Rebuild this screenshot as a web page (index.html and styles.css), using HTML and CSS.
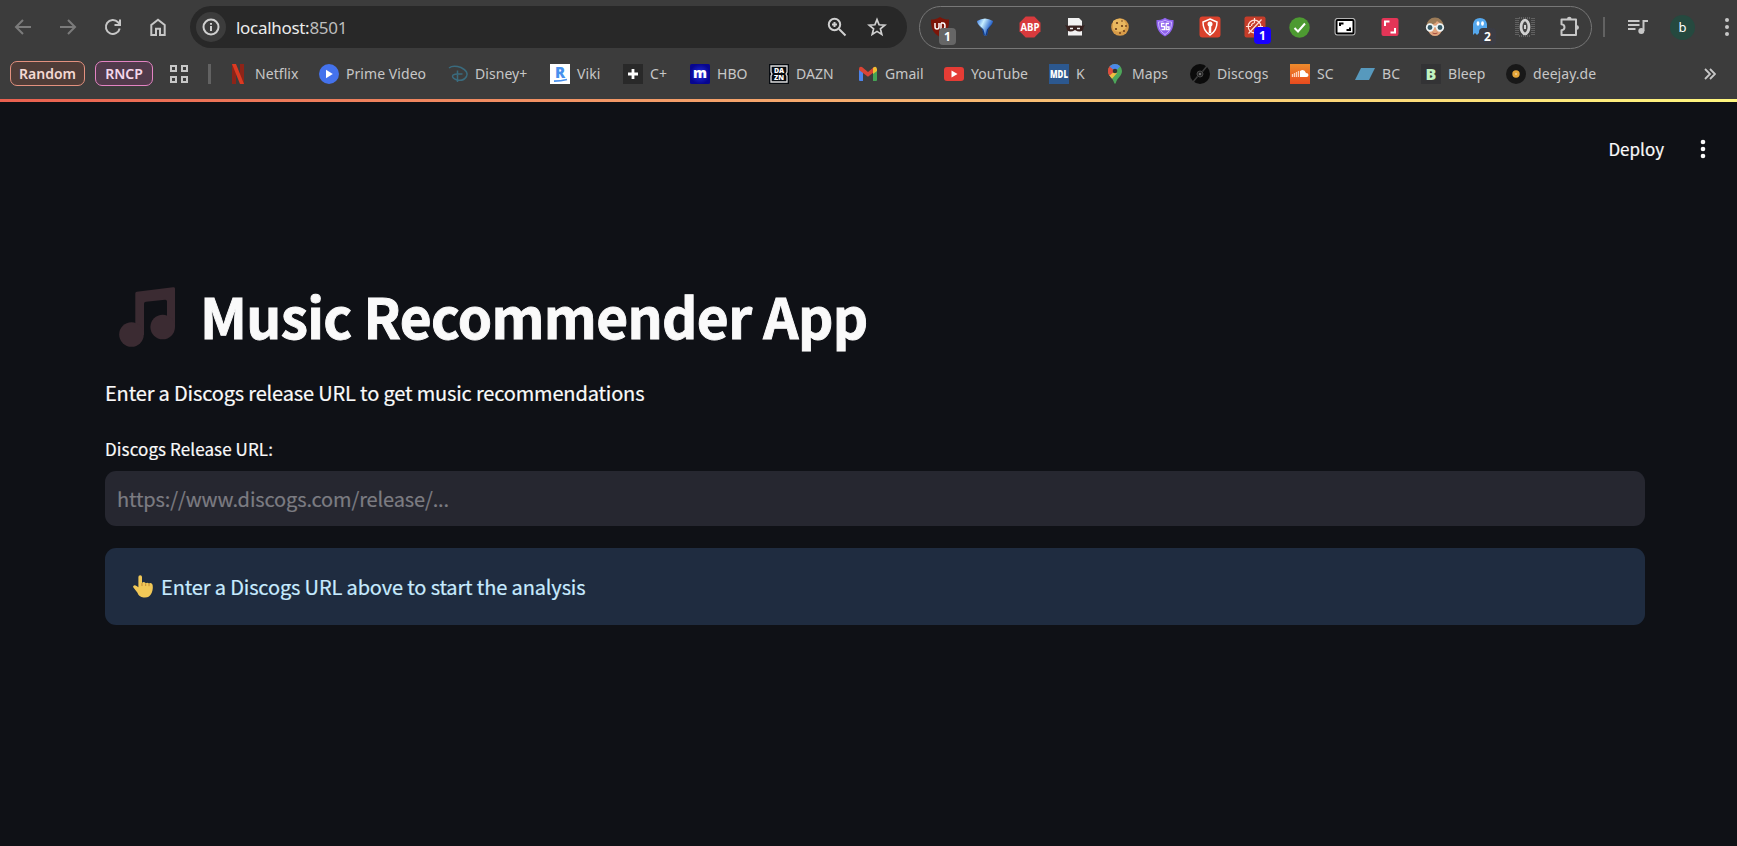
FILE: index.html
```html
<!DOCTYPE html>
<html lang="en">
<head>
<meta charset="utf-8">
<title>Music Recommender App</title>
<link rel="stylesheet" href="styles.css">
</head>
<body>
<header class="browser">
  <div class="toolbar">
    <div class="nav">
      <span class="nav-btn dim"><svg width="18" height="18" viewBox="0 0 18 18"><path d="M17 9H2.5M9 2L2 9l7 7"/></svg></span>
      <span class="nav-btn dim"><svg width="18" height="18" viewBox="0 0 18 18"><path d="M1 9h14.500M9 2l7 7-7 7"/></svg></span>
      <span class="nav-btn"><svg width="18" height="18" viewBox="0 0 18 18"><path d="M15.700 10.500A7 7 0 1 1 14 4.200L15.700 6M16 1.500V7h-5.500"/></svg></span>
      <span class="nav-btn"><svg width="18" height="18" viewBox="0 0 18 18"><path d="M2.300 17V7L9 1.800 15.700 7v10H11v-6.300H7V17z"/></svg></span>
    </div>
    <div class="omnibox">
      <span class="info"><svg width="18" height="18" viewBox="0 0 18 18"><circle cx="9" cy="9" r="7.500"/><path d="M9 8v5M9 5v1.800"/></svg></span>
      <span class="url">localhost:<span class="port">8501</span></span>
      <svg class="line-icon" width="20" height="20" viewBox="0 0 20 20"><circle cx="7.500" cy="7.500" r="5.700"/><path d="M12 12l6.500 6.500M7.500 5v5M5 7.500h5"/></svg>
      <svg class="line-icon star" width="20" height="20" viewBox="0 0 20 20"><path d="M10 2.600l2.100 5.200 5.700.4-4.400 3.600 1.400 5.600-4.800-3-4.800 3 1.400-5.600-4.400-3.600 5.700-.4z"/></svg>
    </div>
    <div class="extensions">
      <span class="ext"><svg width="20" height="20" viewBox="0 0 20 20"><path fill="#7c1508" d="M10 0c3 2 6 2.500 9 2.500 0 8-1 13-9 17.500C2 15.500 1 10.500 1 2.500 4 2.500 7 2 10 0z"/><path d="M5 6v4q0 2 2 2t2-2V6m2 0v6m0-6h2q2 0 2 3t-2 3" fill="none" stroke="#fff" stroke-width="1.500"/></svg><b class="badge grey">1</b></span>
      <span class="ext"><svg width="20" height="20" viewBox="0 0 20 20"><defs><linearGradient id="gem" x2="1" y2=".5"><stop stop-color="#3273df"/><stop offset=".4" stop-color="#c8efff"/><stop offset=".9" stop-color="#1b58c5"/></linearGradient></defs><path d="M2 4Q10-1 18 4q0 3-4.500 7L12 18.500h-3L7.500 12Q2 7 2 4z" fill="url(#gem)"/><path d="M3 7l5.500 5.500 1.500 6-1.500-.5-1.500-6zM17 7l-5 5.500-1.500 6 1.500-.5 1.500-6z" fill="#103a86"/></svg></span>
      <span class="ext"><svg width="22" height="22" viewBox="0 0 22 22"><path fill="#d83a3d" d="M6.700.500h8.600l6.200 6.200v8.600l-6.200 6.200H6.700L.500 15.300V6.700z"/><text x="11" y="14.800" textLength="19" lengthAdjust="spacingAndGlyphs" class="abp">ABP</text></svg></span>
      <span class="ext"><svg width="20" height="20" viewBox="0 0 20 20"><path d="M3 1h11l3 3v14.500H3z" fill="#f1f1f1"/><path d="M0 8q2 1 5 .5h10q3 .5 5-.5l-1.500 2.500q0 4-4 4-2 0-4.500-1.500-2.500 1.500-4.500 1.500-4 0-4-4z" fill="#38211f"/><path d="M5 11.500h3M12 11.500h3" stroke="#eee" stroke-width="1.500"/></svg></span>
      <span class="ext"><svg width="20" height="20" viewBox="0 0 20 20"><circle cx="10" cy="10" r="8.800" fill="#d79b48"/><path d="M3 4q8-5 12 1 3 5-1 8-7 4-11-1z" fill="#e9b75f"/><g fill="#6a3b18"><circle cx="7" cy="6" r="1.100"/><circle cx="12" cy="4" r=".8"/><circle cx="12" cy="9" r="1.100"/><circle cx="6" cy="12" r="1.100"/><circle cx="14" cy="14" r="1"/><circle cx="10" cy="16" r=".9"/><circle cx="16" cy="9" r=".9"/></g></svg></span>
      <span class="ext"><svg width="20" height="20" viewBox="0 0 20 20"><path d="M10 .8C13 3 16 3 18.500 3c.5 7-1.500 13-8.500 16.500C3 16 1 10 1.500 3 4 3 7 3 10 .8z" fill="#8e61ed"/><path d="M10 3c2 1.500 4 2 6.500 2 0 6-2 9.500-6.500 12.500C5.500 14.500 3.500 11 3.500 5 6 5 8 4.500 10 3z" fill="none" stroke="#cbb6ff"/><path d="M9.500 6.500H6.500v3h3v3H6.500M14 6.500h-2.800v6H14V10h-2" fill="none" stroke="#fff" stroke-width="1.300"/></svg></span>
      <span class="ext"><svg width="22" height="22" viewBox="0 0 22 22"><rect x=".5" y=".5" width="21" height="21" rx="3" fill="#da412c"/><path d="M11 3l7 3q0 9-7 13Q4 15 4 6z" fill="none" stroke="#fff" stroke-width="1.500"/><circle cx="11" cy="8" r="2.500" fill="#fff"/><path d="M11 9v8" stroke="#fff" stroke-width="2.500"/></svg></span>
      <span class="ext"><svg width="22" height="22" viewBox="0 0 22 22"><rect x=".5" y=".5" width="21" height="21" rx="2" fill="#c53c29"/><g fill="none" stroke="#ffe1d8" stroke-width="1.200"><circle cx="10.500" cy="10.500" r="6.300"/><path d="M10.500 2v5M10.500 14v5M2 10.500h5M14 10.500h5M4.500 17.500L17.500 3.500M7.500 10a3 3 0 0 1 3-3M13.500 11a3 3 0 0 1-3 3"/></g></svg><b class="badge blue">1</b></span>
      <span class="ext"><svg width="21" height="21" viewBox="0 0 21 21"><circle cx="10.500" cy="10.500" r="10.200" fill="#4d9a31"/><path d="M5.500 11l3.500 3.500 7-8" fill="none" stroke="#fff" stroke-width="2"/></svg></span>
      <span class="ext"><svg width="22" height="20" viewBox="0 0 22 20"><rect x="1" y="1.500" width="20" height="16.500" rx="2" fill="#fff" stroke="#b3b3b3"/><rect x="2.500" y="3" width="17" height="13.500" rx="1" fill="#fff" stroke="#000" stroke-width="2"/><path d="M6 9V6.500h3.500M16 10.500V13h-3.500" fill="none" stroke="#000" stroke-width="2"/></svg></span>
      <span class="ext"><svg width="20" height="20" viewBox="0 0 20 20"><rect x="1.500" y="1" width="17" height="18" rx="2" fill="#e33557"/><path d="M5 9V4.500h4.500M15 11v4.500h-4.500" fill="none" stroke="#fff" stroke-width="2"/></svg></span>
      <span class="ext"><svg width="20" height="20" viewBox="0 0 20 20"><circle cx="10" cy="9" r="8.500" fill="#9b7b58"/><path d="M3 8q7 0 9-4 4 2 5 5v4q-2 6-7 6t-7-6z" fill="#e0a47d"/><g fill="#385b68" stroke="#edf4f5" stroke-width="1.700"><circle cx="5" cy="10.500" r="3.300"/><circle cx="15" cy="10.500" r="3.300"/><path d="M8.500 9.500h3"/></g><path d="M7.500 16q2.500 1.500 5 0" stroke="#a64c3f" fill="none"/></svg></span>
      <span class="ext"><svg width="20" height="20" viewBox="0 0 20 20"><path d="M3 17V7q1-6 7-6t7 6v11l-3-2-2 2-3-2-2 2-2-2-2 2z" fill="#55a8ed"/><ellipse cx="8" cy="6.500" rx="1.400" ry="2.200" fill="#fff"/><ellipse cx="12.500" cy="6.500" rx="1.400" ry="2.200" fill="#fff"/></svg><b class="badge dark">2</b></span>
      <span class="ext"><svg width="20" height="20" viewBox="0 0 20 20"><path d="M1 1v18M3 1v18M17 1v18M19 1v18M4 1h12M4 19h12" stroke="#858585" stroke-dasharray="1 1"/><ellipse cx="10" cy="10" rx="4" ry="6.800" fill="#444" stroke="#d0d0d0" stroke-width="2.800"/><path d="M10 8v4" stroke="#d0d0d0" stroke-width="2"/></svg></span>
      <span class="ext"><svg width="22" height="22" viewBox="0 0 22 22"><path d="M2.500 3.500h14.500v15.500H2.500v-4.700q3-.3 3-3t-3-3z" fill="none" stroke="#c7c7c7" stroke-width="2" stroke-linejoin="round"/><path d="M8 3a2.300 2.300 0 0 1 4.600 0zM17.500 9a2.500 2.500 0 0 1 0 5z" fill="#c7c7c7"/></svg></span>
    </div>
    <span class="divider"></span>
    <svg class="queue" width="20" height="16" viewBox="0 0 20 16"><path d="M0 2h11.500M0 6h11.500M0 10h7.500M15.500 12V2H20" fill="none" stroke="#c7c7c7" stroke-width="2"/><circle cx="13.300" cy="12" r="3" fill="#c7c7c7"/></svg>
    <span class="avatar">b</span>
    <svg class="kebab" width="6" height="20" viewBox="0 0 6 20"><circle cx="3" cy="3" r="2"/><circle cx="3" cy="10" r="2"/><circle cx="3" cy="17" r="2"/></svg>
  </div>
  <nav class="bookmarks">
    <span class="group random">Random</span>
    <span class="group rncp">RNCP</span>
    <svg class="apps" width="18" height="18" viewBox="0 0 18 18"><path d="M1 1h5v5H1zM12 1h5v5h-5zM1 12h5v5H1zM12 12h5v5h-5z" fill="none" stroke="#c7c7c7" stroke-width="2"/></svg>
    <span class="divider short"></span>
    <div class="links">
      <span class="link"><svg viewBox="0 0 20 20"><path d="M4 0h4v20H4zM12 0h4v20h-4z" fill="#8e2418"/><path d="M4 0h4l8 20h-4z" fill="#dc3a22"/></svg>Netflix</span>
      <span class="link"><svg viewBox="0 0 20 20"><circle cx="10" cy="10" r="10" fill="#4472ec"/><path d="M7 5.700l6.800 4.300L7 14.300z" fill="#fff"/></svg>Prime Video</span>
      <span class="link"><svg viewBox="0 0 20 20"><path d="M1 4q4-3 12-.5 8 4 5.500 9-3 5-9.500 3.500-4.500-1.500-4.500-4 0-2.500 10-2M9.500 6.500V18" fill="none" stroke="#3a6b7e" stroke-width="1.500"/></svg>Disney+</span>
      <span class="link"><svg viewBox="0 0 20 20"><path fill="#fff" d="M0 0h20v20H0z"/><text x="10" y="14" class="viki">R</text><path d="M4 17.200q7-.2 13-1.700" stroke="#4790ed" stroke-width="1.800" fill="none"/></svg>Viki</span>
      <span class="link"><svg viewBox="0 0 20 20"><path fill="#292929" d="M0 0h20v20H0z"/><path d="M10 5v10M5 10h10" stroke="#fff" stroke-width="2.800"/></svg>C+</span>
      <span class="link"><svg viewBox="0 0 20 20"><defs><radialGradient id="hbo"><stop stop-color="#2530e0"/><stop offset="1" stop-color="#070690"/></radialGradient></defs><rect width="20" height="20" rx="1.500" fill="url(#hbo)"/><text x="10" y="14.300" class="hbo">m</text></svg>HBO</span>
      <span class="link"><svg viewBox="0 0 20 20"><path fill="#070b10" d="M0 0h20v20H0z"/><path d="M2 8V2h16v6l-1 2 1 2v6H2v-6l1-2z" fill="none" stroke="#ddd" stroke-width="1.300"/><text x="10" y="9.300" class="dazn">DA</text><text x="10" y="16.200" class="dazn">ZN</text></svg>DAZN</span>
      <span class="link"><svg viewBox="0 0 20 20"><path fill="#4c83ea" d="M1 5l4 3v9H2q-1 0-1-1z"/><path fill="#45a455" d="M19 5l-4 3v9h3q1 0 1-1z"/><path fill="#d94435" d="M1 5q0-3 3-2l6 5 6-5v5l-6 4.700L1 6z"/><path fill="#f2bd32" d="M15 4q3-3 4 1v2l-4 3z"/></svg>Gmail</span>
      <span class="link"><svg viewBox="0 0 20 20"><rect y="3" width="20" height="14" rx="3" fill="#e53c35"/><path d="M7.500 6.500L13.500 10l-6 3.500z" fill="#fff"/></svg>YouTube</span>
      <span class="link"><svg viewBox="0 0 20 20"><path fill="#2c588f" d="M0 0h20v20H0z"/><text x="10" y="13.600" textLength="18" lengthAdjust="spacingAndGlyphs" class="mdl">MDL</text></svg>K</span>
      <span class="link"><svg viewBox="0 0 20 20"><defs><clipPath id="pin"><path d="M10 0a7 7 0 0 1 7 7c0 5-5 7-6 11.500q-1 2.500-2 0C8 14 3 12 3 7a7 7 0 0 1 7-7z"/></clipPath></defs><g clip-path="url(#pin)"><path fill="#4da75a" d="M0 0h20v20H0z"/><path d="M0 0h5.500L10 7l-6 6H0z" fill="#dd4c3e"/><path d="M4 2L6 0h9l.5 2L9 9z" fill="#4b88e8"/><path d="M2 12l6-7 4 4-6 7z" fill="#f0bd41"/><path d="M2 4l2-2 6 5-6 5H2z" fill="#dd4c3e"/></g><circle cx="10" cy="7" r="2.300" fill="#343434"/></svg>Maps</span>
      <span class="link"><svg viewBox="0 0 20 20"><circle cx="10" cy="10" r="10" fill="#0b0b0b"/><circle cx="10" cy="10" r="3" fill="#292929" stroke="#484848"/><path d="M12.500 7.500L17 2M7.500 12.500L3 18" stroke="#3c3c3c" stroke-width="1.500"/><circle cx="10" cy="10" r="1" fill="#888"/></svg>Discogs</span>
      <span class="link"><svg viewBox="0 0 20 20"><defs><linearGradient id="sc" y2="1" x2="0"><stop stop-color="#ed8b2c"/><stop offset="1" stop-color="#e84a1e"/></linearGradient></defs><path fill="url(#sc)" d="M0 0h20v20H0z"/><path d="M10 13V7q4-3 6 2 2.500 0 2.500 2t-2 2z" fill="#fff"/><path d="M2.500 10v3M4.500 9v4M6.500 8v5M8.500 7v6" stroke="#ffd4ba" stroke-width="1.300"/></svg>SC</span>
      <span class="link"><svg viewBox="0 0 20 20"><path fill="#5799bd" d="M6 4h14l-6 12H0z"/></svg>BC</span>
      <span class="link"><svg viewBox="0 0 20 20"><path fill="#333335" d="M0 0h20v20H0z"/><text x="10" y="16" class="bleep">B</text></svg>Bleep</span>
      <span class="link"><svg viewBox="0 0 20 20"><circle cx="10" cy="10" r="10" fill="#181818"/><circle cx="10" cy="10" r="3.700" fill="#e4a538"/><circle cx="10" cy="10" r=".7" fill="#fff"/></svg>deejay.de</span>
    </div>
    <svg class="more" width="12" height="12" viewBox="0 0 12 12"><path d="M1 1l5 5-5 5M6 1l5 5-5 5" fill="none" stroke="#c7c7c7" stroke-width="1.800"/></svg>
  </nav>
</header>
<div class="stripe"></div>
<div class="app-bar">
  <span class="deploy">Deploy</span>
  <svg width="6" height="20" viewBox="0 0 6 20"><circle cx="3" cy="3" r="2.300"/><circle cx="3" cy="10" r="2.300"/><circle cx="3" cy="17" r="2.300"/></svg>
</div>
<main class="content">
  <h1 class="title">
    <svg class="note" width="58" height="60" viewBox="0 0 58 60"><path d="M17.300 6.500q0-1.500 1.500-1.700L55 .2q2-.2 2 1.300V40H49V14.500q0-2-2-1.800l-19 2q-2 .2-2 2V48h-8.700z"/><circle cx="13.500" cy="47.500" r="12.300"/><circle cx="44.700" cy="40" r="12.300"/></svg>
    <span>Music Recommender App</span>
  </h1>
  <p class="intro">Enter a Discogs release URL to get music recommendations</p>
  <label class="field-label" for="release">Discogs Release URL:</label>
  <input class="field" id="release" type="text" placeholder="https://www.discogs.com/release/...">
  <div class="alert">
    <svg width="21" height="23" viewBox="0 0 21 23"><path d="M5.400 2Q5.400.3 7.200.3T9 2v6q1-1.500 2.600-.7.900.4 1.100 1 1.700-1.300 3.200.2 2-1 3.200.5 1 1 .6 5-.5 5-3.700 7.400-2 1.400-5.500 1-4.500-.5-6.200-5L.4 12.500Q-.4 11 1 10.400q1.300-.4 2.600.7l1.800 1.200z" fill="#f1c857"/><path d="M9 8v3M12.700 8.500V11M16 8.800v2.400" stroke="#c28a35" fill="none"/></svg>
    <span>Enter a Discogs URL above to start the analysis</span>
  </div>
</main>
</body>
</html>
```
FILE: styles.css
```css
* { box-sizing: border-box; }

body {
  margin: 0;
  height: 846px;
  overflow: hidden;
  background: #0f1116;
  color: #fafafa;
  font-family: "Noto Sans CJK SC", sans-serif;
}

svg { flex: none; display: block; }

/* Browser chrome */
.browser {
  height: 99px;
  padding-top: 6px;
  background: #3c3c3c;
  font-family: "Noto Sans", sans-serif;
}

.toolbar { display: flex; align-items: center; height: 42px; }
.nav { display: flex; width: 190px; }
.nav-btn { display: flex; justify-content: center; width: 45px; }
.nav-btn svg { fill: none; stroke: #c7c7c7; stroke-width: 2; }
.nav-btn.dim svg { stroke: #7b7b7b; }

.omnibox {
  display: flex;
  align-items: center;
  width: 717px;
  height: 42px;
  padding: 0 20px 0 6px;
  border-radius: 21px;
  background: #282828;
}
.info {
  display: grid;
  place-items: center;
  width: 30px;
  height: 30px;
  border-radius: 50%;
  background: #3c3c3c;
}
.info svg, .line-icon { fill: none; stroke: #d0d0d0; stroke-width: 2; }
.url {
  flex: 1;
  padding-left: 10px;
  color: #ececec;
  font-size: 17px;
  letter-spacing: -0.3px;
}
.port { color: #bdbdbd; }
.star { margin-left: 20px; stroke-width: 1.7; }

.extensions {
  display: flex;
  align-items: center;
  width: 673px;
  height: 43px;
  margin-left: 12px;
  border: 1px solid #777;
  border-radius: 22px;
}
.ext { position: relative; display: flex; justify-content: center; flex: 0 0 45px; }
.ext:first-child { margin-left: -3px; }
.badge {
  position: absolute;
  top: 11px;
  left: 22px;
  width: 17px;
  height: 17px;
  border-radius: 4px;
  color: #fff;
  font-size: 12px;
  line-height: 17px;
  text-align: center;
}
.grey { background: #666; }
.blue { background: #1800ff; }
.dark { background: #3b3c44; }
.abp { fill: #fff; font: bold 11px "Open Sans", sans-serif; text-anchor: middle; }

.divider { width: 2px; height: 20px; margin-left: 11px; background: #626262; }
.queue { margin-left: 23px; }
.avatar {
  width: 25px;
  height: 25px;
  margin-left: 22px;
  border-radius: 50%;
  background: #25493f;
  color: #fff;
  font-size: 13px;
  line-height: 25px;
  text-align: center;
}
.kebab { margin-left: 29px; fill: #c7c7c7; }

.bookmarks {
  display: flex;
  align-items: center;
  height: 25px;
  margin-top: 13px;
  padding-left: 10px;
  font-size: 14px;
}
.group {
  height: 25px;
  border: 1px solid;
  border-radius: 7px;
  font-weight: 600;
  line-height: 23px;
  text-align: center;
}
.random { width: 75px; border-color: #e4917f; background: #4f3d38; color: #f3d9d2; }
.rncp { width: 58px; margin-left: 10px; border-color: #e483c3; background: #513a4b; color: #f4d7eb; }
.apps { margin-left: 17px; }
.short { width: 3px; margin-left: 20px; }
.links {
  display: grid;
  grid-template-columns: 91px 129px 102px 73px 67px 79px 89px 86px 105px 56px 85px 100px 65px 66px 85px 120px;
  margin-left: 17px;
}
.link {
  display: flex;
  align-items: center;
  gap: 7px;
  color: #c7c7c7;
  letter-spacing: 0.06px;
  white-space: nowrap;
}
.link svg { width: 20px; height: 20px; overflow: visible; }
.link text {
  letter-spacing: 0;
  line-height: 1;
  text-anchor: middle;
  font-family: "Open Sans", sans-serif;
  font-weight: 800;
}
.viki { fill: #4790ed; font-size: 15px; }
.hbo { fill: #fff; font-size: 14px; }
.dazn { fill: #fff; font-size: 7px; }
.mdl { fill: #fff; font-size: 10px; }
.bleep { fill: #c0f4c1; font-size: 16px; }
.more { margin-left: 78px; }

/* Application */
.stripe { height: 3px; background: linear-gradient(90deg, #e9604f, #f7b271 52%, #fff77f); }
.app-bar {
  display: flex;
  align-items: center;
  justify-content: flex-end;
  gap: 36px;
  height: 94px;
  padding-right: 31px;
  font-size: 17px;
}
.deploy { padding-bottom: 2px; -webkit-text-stroke: 0.2px; }
.app-bar svg { fill: #fafafa; }

.content { width: 1540px; margin: 76px 0 0 105px; }
.title {
  display: flex;
  gap: 24px;
  height: 90px;
  margin: 0;
  padding-left: 13px;
  font-size: 55px;
  font-weight: 700;
  line-height: 86px;
  letter-spacing: -0.65px;
  white-space: nowrap;
  -webkit-text-stroke: 0.9px;
}
.note { margin-top: 15px; fill: #3b2b32; }
.intro {
  height: 36px;
  margin: 13px 0 0;
  font-size: 20px;
  line-height: 36px;
  letter-spacing: -0.16px;
  -webkit-text-stroke: 0.2px;
}
.field-label {
  display: block;
  height: 30px;
  margin-top: 23px;
  font-size: 17px;
  line-height: 30px;
  letter-spacing: 0.1px;
  -webkit-text-stroke: 0.2px;
}
.field {
  display: block;
  width: 100%;
  height: 55px;
  margin-top: 7px;
  padding: 0 12px;
  border: 0;
  border-radius: 11px;
  background: #262730;
  color: #fafafa;
  font: 20px "Noto Sans CJK SC", sans-serif;
  letter-spacing: -0.14px;
  -webkit-text-stroke: 0.2px;
}
.field::placeholder { color: #7c7c82; opacity: 1; }
.alert {
  display: flex;
  align-items: center;
  gap: 7px;
  height: 77px;
  margin-top: 22px;
  padding: 0 28px;
  border-radius: 11px;
  background: #1f2c40;
  color: #c7ebff;
  font-size: 20px;
  letter-spacing: -0.14px;
  -webkit-text-stroke: 0.2px;
}
```
